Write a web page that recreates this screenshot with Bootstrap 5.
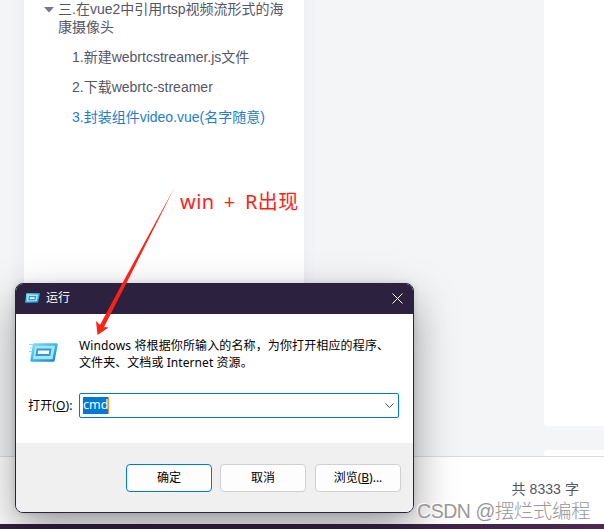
<!DOCTYPE html>
<html lang="zh-CN">
<head>
<meta charset="utf-8">
<meta name="viewport" content="width=device-width, initial-scale=1">
<title>运行</title>
<link href="https://cdn.jsdelivr.net/npm/bootstrap@5.3.0/dist/css/bootstrap.min.css" rel="stylesheet">
<style>
body{width:604px;height:529px;background:#f4f5f7;font-family:"Liberation Sans","Noto Sans CJK SC",sans-serif;font-size:14px;color:#555666}
.gutter{width:24px;background:linear-gradient(90deg,#f4f5f7 0 9px,#f1f2f4 15px,#eff0f3)}
.workspace{height:456px}
.outline-wrap{width:280px}
.outline-list{padding-left:34px}
.outline-list li{white-space:nowrap;line-height:18px}
.subitems{padding:12px 0 0 14px;gap:12px}
.current{color:#267dcc}
.caret{left:20px;top:7px}
.side{width:60px}
.side-top{height:426px;border-radius:0 0 0 3px}
.side-next{height:6px;border-radius:3px 0 0 0}
.middle{width:240px;background:linear-gradient(90deg,#eff0f4 0,#f4f5f7 12px)}
.statusbar{height:68px;border-top:1px solid #dcdcde;padding:21px 25px 0 0}
.count{line-height:22px;font-size:14px;letter-spacing:.07px}
.taskbar{height:5px;background:linear-gradient(90deg,#30203f,#382346 65%,#50294f)}
.run-window{left:15px;top:283px;width:399px;height:230px;border:1px solid #2d2140;border-radius:8px;box-shadow:0 18px 44px rgba(0,0,0,.38),0 0 6px rgba(0,0,0,.12);font-family:"Noto Sans","Noto Sans CJK SC",sans-serif;font-size:12px;color:#000;background:#fff}
.titlebar{height:30px;background:#2d2140;padding:0 10px 2px 9px;color:#fff}
.titlebar-text{margin-left:6px}
.run-body{height:129px;padding:23px 14px 0 12px}
.app-icon{margin-top:5px}
.message{line-height:17px;white-space:nowrap;margin-left:20px}
.message-first{letter-spacing:.13px}
.message-second{letter-spacing:.07px}
.field-row{margin-top:22px}
.field-label{width:51px;white-space:nowrap;letter-spacing:.15px}
.combo{width:320px;height:25px;border:1px solid #0078d4;border-radius:2px;padding:0 4px 0 3px}
.selected-text{background:#0078d7;color:#fff;border-right:1px solid #ff8728;line-height:15px;font-size:12.5px;width:26px;height:17px;overflow:hidden}
.run-actions{height:69px;background:#f0f0f0;padding:21px 12px 0 0;gap:8px}
.run-btn{width:86px;height:28px;border:1px solid #d0d0d0;border-radius:4px;background:#fdfdfd;font-size:12px;line-height:26px;padding:0;color:#000}
.run-btn.is-default{border-color:#0078d4}
.run-btn:last-child{margin-left:1px}
.arrow{left:0;top:0}
.annotation{left:180px;top:187px;color:#ff2116;font:20px/30px "Noto Sans","Noto Sans CJK SC",sans-serif;word-spacing:3.6px;letter-spacing:.45px;white-space:nowrap}
.watermark{left:417px;top:498px;font:19.5px/26px "Liberation Sans","Noto Sans CJK SC",sans-serif;font-weight:300;letter-spacing:-.45px;color:#999;text-shadow:-1px -1px 0 rgba(255,255,255,.9);white-space:nowrap}
</style>
<script src="https://cdn.jsdelivr.net/npm/bootstrap@5.3.0/dist/js/bootstrap.bundle.min.js"></script>
</head>
<body class="position-relative overflow-hidden">
<div class="workspace d-flex">
  <div class="gutter flex-shrink-0"></div>
  <aside class="outline-wrap bg-white flex-shrink-0 position-relative">
    <svg class="caret position-absolute" width="10" height="6"><path d="M0 0H10L5 5.5Z" fill="#77788a"/></svg>
    <ul class="outline-list list-unstyled mb-0">
      <li>三.在vue2中引用rtsp视频流形式的海<br>康摄像头
        <ul class="list-unstyled d-flex flex-column subitems">
          <li>1.新建webrtcstreamer.js文件</li>
          <li>2.下载webrtc-streamer</li>
          <li class="current">3.封装组件video.vue(名字随意)</li>
        </ul>
      </li>
    </ul>
  </aside>
  <div class="middle flex-shrink-0"></div>
  <div class="side d-flex flex-column justify-content-between flex-shrink-0">
    <div class="side-top bg-white"></div>
    <div class="side-next bg-white"></div>
  </div>
</div>
<footer class="statusbar bg-white d-flex justify-content-end"><span class="count">共 8333 字</span></footer>
<div class="taskbar"></div>

<section class="run-window position-absolute overflow-hidden">
  <header class="titlebar d-flex align-items-center">
    <svg width="15" height="10" viewBox="0 0 30 20"><defs><linearGradient id="g" x2="1" y2="1"><stop stop-color="#7bdcf8"/><stop offset=".5" stop-color="#39b6ea"/><stop offset="1" stop-color="#1787cf"/></linearGradient></defs><path d="M4 2H28L25 18H2Z" fill="#a9e6fa" stroke="url(#g)" stroke-width="3"/><path d="M9 7H21L20 13H8Z" fill="#fff" stroke="#249bd8" stroke-width="2.5"/></svg>
    <span class="titlebar-text">运行</span>
    <svg class="ms-auto" width="11" height="11"><path d="M.5 .5 10.5 10.5M10.5 .5.5 10.5" stroke="#fff" fill="none"/></svg>
  </header>
  <div class="run-body">
    <div class="d-flex">
      <svg class="app-icon" width="31" height="22" viewBox="0 0 31 22"><path d="M6 2.5H28.500L25.500 18.500H3.500Z" fill="#a5e5fa" stroke="url(#g)" stroke-width="2.4" stroke-linejoin="round"/><path d="M9.500 7.500H22.500L21.500 13H8.500Z" fill="#fff" stroke="#2b9bd8" stroke-width="1.8"/><path d="M1 2.500H6M2 6H5M1 9.500H4M2 13H4" stroke="#8cddf7"/></svg>
      <div class="message"><span class="message-first">Windows 将根据你所输入的名称，为你打开相应的程序、</span><br><span class="message-second">文件夹、文档或 Internet 资源。</span></div>
    </div>
    <div class="field-row d-flex align-items-center">
      <label class="field-label">打开(<u>O</u>):</label>
      <div class="combo d-flex align-items-center justify-content-between">
        <span class="selected-text">cmd</span>
        <svg width="9" height="6"><path d="M.5 .5 4.5 4.5 8.5.5" stroke="#555" fill="none"/></svg>
      </div>
    </div>
  </div>
  <div class="run-actions d-flex justify-content-end">
    <button class="btn run-btn is-default">确定</button>
    <button class="btn run-btn">取消</button>
    <button class="btn run-btn">浏览(<u>B</u>)...</button>
  </div>
</section>
<svg class="arrow position-absolute" width="200" height="345"><path d="M174.500 187.500 126 284 104 327 108.500 327.500 97.500 335 96 321 100 325 122 284Z" fill="#ff2116"/></svg>
<div class="annotation position-absolute">win + R出现</div>
<div class="watermark position-absolute">CSDN @摆烂式编程</div>
</body>
</html>
